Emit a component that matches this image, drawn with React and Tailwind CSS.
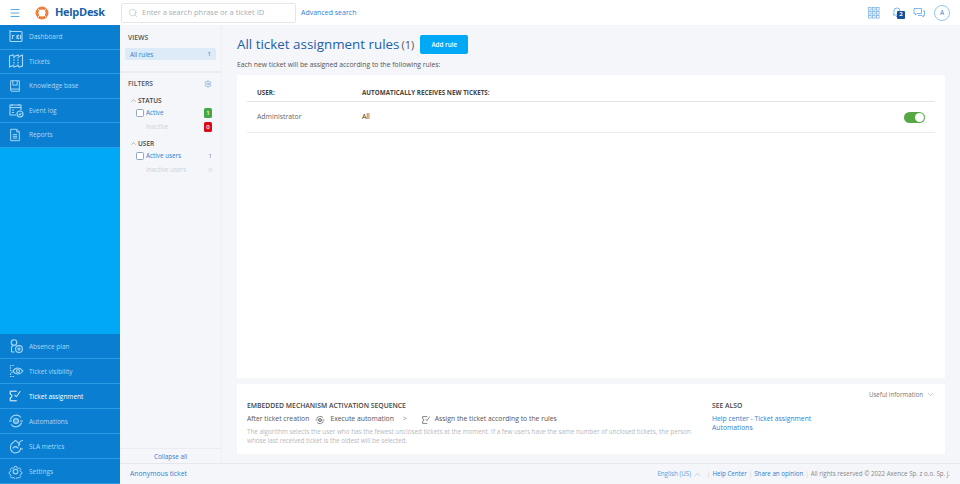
import React from "react";
import { Menu, Search, ChevronUp, ChevronDown, Settings } from "lucide-react";

const topItems = [
  { label: "Dashboard", icon: "dash" },
  { label: "Tickets", icon: "map" },
  { label: "Knowledge base", icon: "book" },
  { label: "Event log", icon: "log" },
  { label: "Reports", icon: "doc" },
];

const bottomItems = [
  { label: "Absence plan", icon: "people" },
  { label: "Ticket visibility", icon: "eye" },
  { label: "Ticket assignment", icon: "assign", active: true },
  { label: "Automations", icon: "auto" },
  { label: "SLA metrics", icon: "sla" },
  { label: "Settings", icon: "gear" },
];

const NavIcon = ({ type, className = "" }) => {
  const common = {
    width: 14,
    height: 14,
    viewBox: "0 0 16 16",
    fill: "none",
    stroke: "currentColor",
    strokeWidth: 1.1,
    className,
  };
  switch (type) {
    case "dash":
      return (
        <svg {...common} width={16} height={16}>
          <rect x="2" y="2.5" width="12" height="10" rx="1" />
          <path d="M1 2h2M4.5 10V6.5h2M9 6v4M9 8l2-2M9 8l2 2M12.5 6v4" />
        </svg>
      );
    case "map":
      return (
        <svg {...common} width={16} height={16}>
          <path d="M1.5 3l3.5-1 1 1.5L10 2l1 1.5L14.5 2v11l-3.5 1-1-1.5L6 14l-1-1.5L1.5 14z" />
          <path d="M6 4v8M10 4v8" strokeDasharray="1.5 1" />
        </svg>
      );
    case "book":
      return (
        <svg {...common}>
          <path d="M3 2h10v12H4.5A1.5 1.5 0 013 12.5z" />
          <path d="M3 11.5h10M5.500 2v5h5V2" />
        </svg>
      );
    case "log":
      return (
        <svg {...common} width={16} height={16}>
          <path d="M8 13H2V3h11v5" />
          <path d="M2 5.5h11M4 8h2M4 10.5h2M4 2v2M11 2v2" />
          <circle cx="12" cy="12" r="3" />
          <path d="M10.8 12l1 1 1.5-1.800" />
        </svg>
      );
    case "doc":
      return (
        <svg {...common}>
          <path d="M3 1.500h7l3 3v10H3z" />
          <path d="M10 1.500v3h3M5.500 7.500h5M5.500 9.500h5M5.500 11.500h5" />
        </svg>
      );
    case "people":
      return (
        <svg {...common} width={16} height={16}>
          <circle cx="6" cy="4.500" r="2.800" />
          <path d="M3.500 14V10a2.500 2.500 0 012.500-2.500M3.500 14h3" />
          <circle cx="11" cy="11" r="3.400" />
          <circle cx="11" cy="11" r="1" />
        </svg>
      );
    case "eye":
      return (
        <svg {...common} width={16} height={16}>
          <path d="M6 13.500H2.500v-3a1.500 1.500 0 000-3v-5H6" strokeDasharray="1.500 1" />
          <path d="M5 8c2.500-4 7-4 10 0-3 4-7.500 4-10 0z" />
          <circle cx="10" cy="8" r="1.500" />
        </svg>
      );
    case "assign":
      return (
        <svg {...common}>
          <path d="M10 2.500H2.500v3.500a2 2 0 010 4v3.500H10" />
          <path d="M7.500 6.500l2 2.500 4.500-6.500" />
        </svg>
      );
    case "auto":
      return (
        <svg {...common} width={16} height={16}>
          <circle cx="8" cy="8" r="2.500" fill="currentColor" fillOpacity="0.4" />
          <path d="M2.500 6.500A6 6 0 0113 4.500M13.500 9.500A6 6 0 013 11.500" />
          <path d="M1 8h3M12 8h3" />
        </svg>
      );
    case "sla":
      return (
        <svg {...common} width={15} height={15}>
          <path d="M8 1.500l4.500 4-1 1.500A4.500 4.500 0 1113.500 10a5.500 5.500 0 01-10.500 1.500C2 9 3 7 3.500 5.500z" />
          <path d="M5 10c2-2.500 4-2.500 6 0" />
        </svg>
      );
    default:
      return (
        <svg {...common} width={15} height={15}>
          <circle cx="8" cy="8" r="2.500" />
          <path d="M6.700 1.500h2.600l.4 1.900 1.500.7 1.700-1 1.800 1.900-1 1.600.6 1.500 1.700.5v2.500l-1.800.5-.6 1.400 1 1.600-1.800 1.800-1.600-1-1.500.6-.4 1.800H6.700l-.5-1.800-1.500-.6-1.600 1-1.800-1.800 1-1.600-.6-1.400-1.700-.5V8.600l1.700-.5.6-1.500-1-1.600 1.800-1.900 1.700 1 1.400-.7z" transform="translate(1.300 1.300) scale(0.84)" />
        </svg>
      );
  }
};

const NavRow = ({ item, className }) => (
  <a
    className={`flex items-center pl-[7px] border-b border-[#2b9be6] ${className} ${
      item.active ? "text-white" : "text-[#a9d8f7]"
    }`}
  >
    <span className="w-[22px] flex justify-start pl-[1px]">
      <NavIcon type={item.icon} />
    </span>
    <span className="pt-[1px] text-[6.500px]">{item.label}</span>
  </a>
);

const FilterRow = ({ label, dim, children, check }) => (
  <div className="flex items-center h-[14px] pl-[17px] pr-[9px]">
    <span className="w-[9px]">
      {check && (
        <span className="block w-[6px] h-[6px] box-content rounded-[1.500px] border border-[#8fa6c0] bg-white -ml-[1px]" />
      )}
    </span>
    <span className={`text-[6.300px] ${dim ? "text-[#cdd2d9]" : "text-[#2f7fd1]"}`}>{label}</span>
    <span className="ml-auto">{children}</span>
  </div>
);

const Badge = ({ color, children }) => (
  <span className={`flex items-center justify-center w-[8px] h-[10px] rounded-[1.500px] text-[6px] font-semibold text-white ${color}`}>
    {children}
  </span>
);

export default function App() {
  return (
    <div className="w-[960px] h-[484px] overflow-hidden flex flex-col bg-[#f4f6fa] font-['Open_Sans',sans-serif] text-[#444]">
      {/* top bar */}
      <header className="h-[25px] flex items-center bg-white shrink-0">
        <div className="w-[120px] flex items-center">
          <Menu size={12} strokeWidth={1.500} className="ml-[9px] text-[#1c8fe0]" />
          <svg width="14" height="14" viewBox="0 0 14 14" className="ml-[14px]">
            <circle cx="7" cy="7" r="5" fill="none" stroke="#ee7f3b" strokeWidth="3" />
            <path d="M3 3l8 8M11 3l-8 8" stroke="#fff" strokeWidth="1" />
          </svg>
          <span className="ml-[6px] text-[11px] font-bold tracking-[-0.3px] text-[#1d5fa8]">HelpDesk</span>
        </div>
        <div className="w-[175px] h-[20px] ml-[1px] flex items-center rounded-[2px] border border-[#e3e7ec] bg-white">
          <Search size={10} strokeWidth={1} className="ml-[6px] text-[#9aa3ad]" />
          <span className="ml-[4px] text-[7.500px] text-[#a8adb3]">Enter a search phrase or a ticket ID</span>
        </div>
        <span className="ml-[5px] pt-[1px] text-[7px] text-[#2f7fd1]">Advanced search</span>
        <div className="ml-auto flex items-center">
          <svg width="12" height="12" viewBox="0 0 12 12" className="text-[#7fb3e6]" fill="none" stroke="currentColor" strokeWidth="0.800">
            {[0.5, 4.5, 8.5].map((y) =>
              [0.5, 4.5, 8.5].map((x) => (
                <rect key={`${x}-${y}`} x={x} y={y} width="2.600" height="2.600" />
              ))
            )}
          </svg>
          <span className="relative ml-[12px] w-[12px] h-[14px]">
            <svg width="10" height="12" viewBox="0 0 10 12" fill="none" stroke="#5aa5e8" strokeWidth="0.800">
              <path d="M1 9c1-1 1-2 1-4a3 3 0 016 0c0 2 0 3 1 4zM4 10.500h2" />
            </svg>
            <span className="absolute left-[5px] top-[5px] w-[8px] h-[8px] rounded-[1px] bg-[#14529e] text-white text-[6px] font-bold flex items-center justify-center">
              2
            </span>
          </span>
          <svg width="12" height="12" viewBox="0 0 12 12" className="ml-[9px]" fill="none" stroke="#5aa5e8" strokeWidth="0.800">
            <path d="M1 1.500h7.500v5H4l-1.500 1.500V6.500H1z" />
            <path d="M10 4h1.500v4.500h-1v1.500l-1.500-1.500H5" />
          </svg>
          <span className="ml-[9px] mr-[10px] w-[16px] h-[16px] rounded-full border border-[#8cc8f5] flex items-center justify-center text-[6.500px] text-[#2f7fd1]">
            A
          </span>
        </div>
      </header>

      <div className="flex-1 flex min-h-0">
        {/* sidebar */}
        <nav className="w-[120px] flex flex-col bg-[#00a8f5] shrink-0">
          <div className="flex flex-col bg-[#0a7fd1]">
            {topItems.map((item) => (
              <NavRow key={item.label} item={item} className="h-[24.500px]" />
            ))}
          </div>
          <div className="mt-auto flex flex-col bg-[#0a7fd1]">
            {bottomItems.map((item) => (
              <NavRow key={item.label} item={item} className="h-[25px]" />
            ))}
          </div>
        </nav>

        <div className="flex-1 flex flex-col min-w-0">
          <div className="flex-1 flex min-h-0">
            {/* views / filters */}
            <aside className="w-[102px] flex flex-col bg-[#f4f6fa] border-r border-[#eef0f4] shrink-0">
              <div className="h-[48px] px-[5px] border-b-[2px] border-[#e9ecf1]">
                <div className="pl-[3px] pt-[7px] box-content text-[6.800px] font-semibold text-[#555] leading-[12px]">VIEWS</div>
                <div className="mt-[4px] h-[12px] pt-[1px] flex items-center justify-between px-[5px] rounded-[2px] bg-[#dcebf7] text-[6.300px] text-[#2f7fd1]">
                  <span>All rules</span>
                  <span className="text-[6px]">1</span>
                </div>
              </div>
              <div className="flex items-center justify-between pl-[8px] pr-[9px] h-[22px]">
                <span className="text-[6.800px] font-semibold text-[#555]">FILTERS</span>
                <Settings size={8} className="text-[#7fa4d8]" />
              </div>
              <div className="flex items-center pl-[10px] h-[11px] text-[6.500px] font-semibold text-[#444]">
                <ChevronUp size={7} className="mr-[1px] text-[#888]" />
                STATUS
              </div>
              <FilterRow label="Active" check>
                <Badge color="bg-[#45a945]">1</Badge>
              </FilterRow>
              <FilterRow label="Inactive" dim>
                <Badge color="bg-[#dc0a12]">0</Badge>
              </FilterRow>
              <div className="flex items-center pl-[10px] h-[15px] pt-[4px] text-[6.500px] font-semibold text-[#444]">
                <ChevronUp size={7} className="mr-[1px] text-[#888]" />
                USER
              </div>
              <FilterRow label="Active users" check>
                <span className="block text-[6px] text-[#6d87a5]">1</span>
              </FilterRow>
              <FilterRow label="Inactive users" dim>
                <span className="block text-[6px] text-[#cdd2d9]">0</span>
              </FilterRow>
              <div className="mt-auto h-[15px] pt-[1px] flex items-center justify-center border-t border-[#e9ecf1] text-[6.300px] text-[#2f7fd1]">
                Collapse all
              </div>
            </aside>

            {/* main */}
            <main className="flex-1 flex flex-col pl-[15px] pr-[15px] min-w-0">
              <div className="flex items-center h-[19px] mt-[10px]">
                <h1 className="pt-[1px] text-[13.400px] font-normal text-[#1d5fa8] leading-none">All ticket assignment rules</h1>
                <span className="ml-[2px] pt-[1px] text-[11px] text-[#555]">(1)</span>
                <button className="ml-[6px] w-[48px] h-[19px] rounded-[2px] bg-[#00a8f5] text-white text-[6.300px] font-semibold">
                  Add rule
                </button>
              </div>
              <p className="mt-[6px] text-[6.800px] leading-[10px] text-[#555]">Each new ticket will be assigned according to the following rules:</p>
              <section className="mt-[5px] h-[303px] bg-white px-[10px]">
                <div className="h-[27px] pt-[9px] flex items-center border-b border-[#dfe6ea] text-[6.300px] font-bold text-[#444]">
                  <span className="w-[115px] pl-[10px]">USER:</span>
                  <span>AUTOMATICALLY RECEIVES NEW TICKETS:</span>
                </div>
                <div className="h-[31px] flex items-center border-b border-[#e8edf0] text-[6.900px]">
                  <span className="w-[115px] pl-[10px] pt-[1px] text-[#666]">Administrator</span>
                  <span className="pt-[1px] text-[#333]">All</span>
                  <span className="ml-auto mr-[10px] relative w-[21px] h-[11px] rounded-full bg-[#55a844]">
                    <span className="absolute right-[1px] top-[1px] w-[9px] h-[9px] rounded-full bg-white" />
                  </span>
                </div>
              </section>
              <section className="mt-[6px] h-[70px] bg-white pl-[10px] pr-[10px] relative flex">
                <div className="w-[465px] pt-[16px]">
                  <div className="text-[6.800px] font-semibold text-[#444] leading-[12px]">
                    EMBEDDED MECHANISM ACTIVATION SEQUENCE
                  </div>
                  <div className="flex items-center h-[15px] text-[6.800px] text-[#555]">
                    <span>After ticket creation</span>
                    <NavIcon type="auto" className="w-[10px] h-[10px] ml-[6px]" />
                    <span className="ml-[5px]">Execute automation</span>
                    <span className="ml-[9px] text-[#888]">&gt;</span>
                    <NavIcon type="assign" className="w-[10px] h-[10px] ml-[14px]" />
                    <span className="ml-[4px]">Assign the ticket according to the rules</span>
                  </div>
                  <p className="w-[450px] text-[6.300px] leading-[9px] text-[#b5b9be]">
                    The algorithm selects the user who has the fewest unclosed tickets at the moment. If a few users have the same number of unclosed tickets, the person whose last received ticket is the oldest will be selected.
                  </p>
                </div>
                <div className="pt-[16px]">
                  <div className="text-[6.800px] font-semibold text-[#444] leading-[12px]">SEE ALSO</div>
                  <div className="text-[6.800px] leading-[9px] text-[#2f7fd1] mt-[2px]">
                    <div>Help center - Ticket assignment</div>
                    <div>Automations</div>
                  </div>
                </div>
                <div className="absolute right-[10px] top-[6px] flex items-center text-[6.200px] text-[#777]">
                  Useful information
                  <ChevronDown size={9} strokeWidth={1} className="ml-[3px]" />
                </div>
              </section>
            </main>
          </div>

          {/* footer */}
          <footer className="h-[21px] shrink-0 flex items-center border-t border-[#e4e7ec] pl-[10px] pr-[10px] text-[6.200px]">
            <span className="text-[6.800px] text-[#2f7fd1]">Anonymous ticket</span>
            <span className="ml-auto text-[#5a9bdc]">English (US)</span>
            <ChevronUp size={9} strokeWidth={1} className="ml-[2px] text-[#5a9bdc]" />
            <span className="ml-[5px] text-[#cfd3d8]">|</span>
            <span className="ml-[2px] text-[#2f7fd1]">Help Center</span>
            <span className="mx-[2px] text-[#cfd3d8]">|</span>
            <span className="text-[#2f7fd1]">Share an opinion</span>
            <span className="mx-[2px] text-[#cfd3d8]">|</span>
            <span className="text-[#888]">All rights reserved © 2022 Axence Sp. z o.o. Sp. j.</span>
          </footer>
        </div>
      </div>
    </div>
  );
}
